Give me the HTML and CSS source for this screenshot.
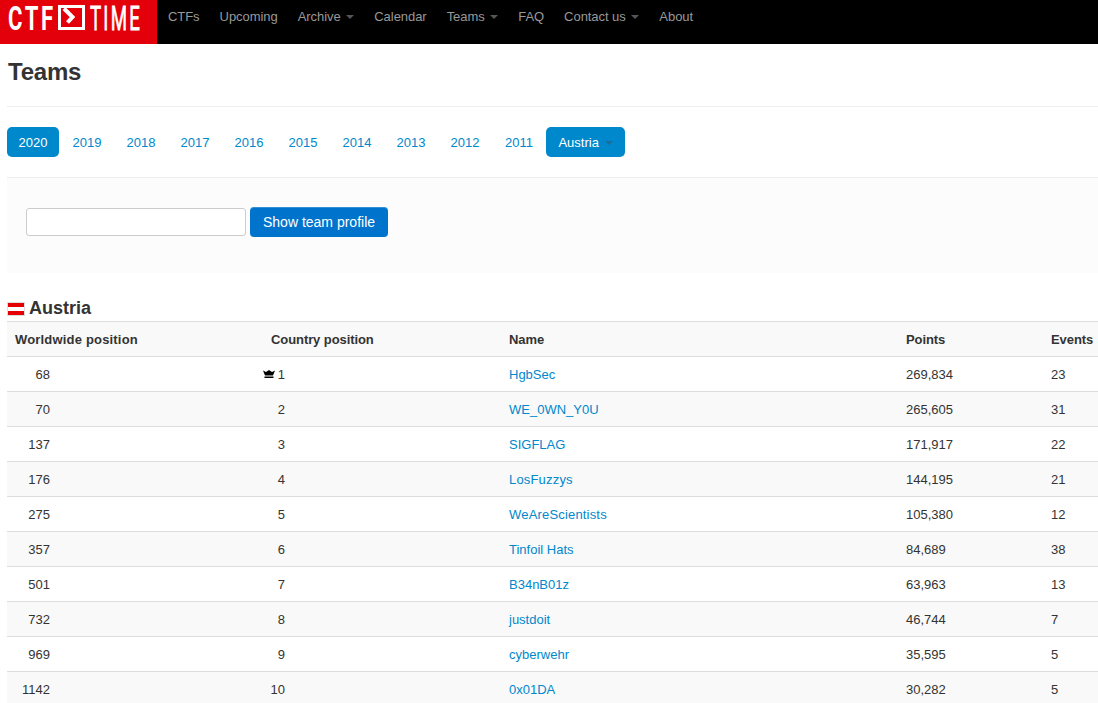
FILE: index.html
```
<!DOCTYPE html>
<html lang="en">
<head>
    <meta charset="UTF-8">
    <title>CTFtime.org / Teams</title>
    <link rel="stylesheet" href="styles.css">
</head>
<body>
<div class="navbar">
    <a class="logo" href="#">
        <svg width="157" height="44" viewBox="0 0 157 44">
            <text class="logo-bold" transform="translate(8 30) scale(.65 1)">CTF</text>
            <path d="M59.500 6.500h24v22h-24z" fill="none" stroke="#fff" stroke-width="3"/>
            <path d="M64 8.500l8.500 8.500-5 5.500" fill="none" stroke="#fff" stroke-width="4"/>
            <text class="logo-thin" transform="translate(90 30) scale(.55 1)">TIME</text>
        </svg>
    </a>
    <ul class="nav">
        <li><a href="#">CTFs</a></li>
        <li><a href="#">Upcoming</a></li>
        <li><a href="#">Archive <b class="caret"></b></a></li>
        <li><a href="#">Calendar</a></li>
        <li><a href="#">Teams <b class="caret"></b></a></li>
        <li><a href="#">FAQ</a></li>
        <li><a href="#">Contact us <b class="caret"></b></a></li>
        <li><a href="#">About</a></li>
    </ul>
</div>
<div class="container">
    <div class="page-header">
        <h2>Teams</h2>
    </div>
    <ul class="pills">
        <li class="active"><a href="#">2020</a></li>
        <li><a href="#">2019</a></li>
        <li><a href="#">2018</a></li>
        <li><a href="#">2017</a></li>
        <li><a href="#">2016</a></li>
        <li><a href="#">2015</a></li>
        <li><a href="#">2014</a></li>
        <li><a href="#">2013</a></li>
        <li><a href="#">2012</a></li>
        <li><a href="#">2011</a></li>
        <li class="active country"><a href="#">Austria <b class="caret"></b></a></li>
    </ul>
    <form class="well">
        <input type="text">
        <button type="button">Show team profile</button>
    </form>
    <h3>
        <svg class="flag" width="18" height="14" viewBox="0 0 18 14">
            <path d="M0 0h18v14H0z" fill="#ddd"/>
            <path d="M1 1h16v12H1z" fill="#e40000"/>
            <path d="M1 5h16v4H1z" fill="#fff"/>
        </svg>
        <span>Austria</span>
    </h3>
    <table>
        <colgroup>
            <col class="col-world">
            <col class="col-country">
            <col class="col-name">
            <col class="col-points">
            <col>
        </colgroup>
        <tr><th class="wide">Worldwide position</th><th>Country position</th><th>Name</th><th>Points</th><th>Events</th></tr>
        <tr>
            <td class="world"><span>68</span></td>
            <td class="place">
                <svg class="crown" width="12" height="10" viewBox="0 0 12 10">
                    <path d="M0 1.500l3 1.500 3-2 3 2 3-1.500-2 5H2zM1.500 7.500h9v1.500h-9z"/>
                </svg>
                <span>1</span>
            </td>
            <td><a href="#">HgbSec</a></td><td>269,834</td><td>23</td>
        </tr>
        <tr><td class="world"><span>70</span></td><td class="place"><span>2</span></td><td><a href="#">WE_0WN_Y0U</a></td><td>265,605</td><td>31</td></tr>
        <tr><td class="world"><span>137</span></td><td class="place"><span>3</span></td><td><a href="#">SIGFLAG</a></td><td>171,917</td><td>22</td></tr>
        <tr><td class="world"><span>176</span></td><td class="place"><span>4</span></td><td><a class="wide" href="#">LosFuzzys</a></td><td>144,195</td><td>21</td></tr>
        <tr><td class="world"><span>275</span></td><td class="place"><span>5</span></td><td><a class="wide" href="#">WeAreScientists</a></td><td>105,380</td><td>12</td></tr>
        <tr><td class="world"><span>357</span></td><td class="place"><span>6</span></td><td><a href="#">Tinfoil Hats</a></td><td>84,689</td><td>38</td></tr>
        <tr><td class="world"><span>501</span></td><td class="place"><span>7</span></td><td><a href="#">B34nB01z</a></td><td>63,963</td><td>13</td></tr>
        <tr><td class="world"><span>732</span></td><td class="place"><span>8</span></td><td><a href="#">justdoit</a></td><td>46,744</td><td>7</td></tr>
        <tr><td class="world"><span>969</span></td><td class="place"><span>9</span></td><td><a href="#">cyberwehr</a></td><td>35,595</td><td>5</td></tr>
        <tr><td class="world"><span>1142</span></td><td class="place"><span>10</span></td><td><a href="#">0x01DA</a></td><td>30,282</td><td>5</td></tr>
    </table>
</div>
</body>
</html>
```
FILE: styles.css
```
*{
    margin: 0;
    padding: 0;
    box-sizing: border-box;
}
html,body{
    height: 703px;
    overflow: hidden;
}
body{
    background: #fff;
    color: #333;
    font: 13px/18px "Liberation Sans", Arial, sans-serif;
}
li{
    list-style: none;
}
a{
    color: #0088cc;
    text-decoration: none;
}
svg{
    display: block;
}
.navbar{
    display: flex;
    height: 44px;
    background: #000;
}
.logo{
    width: 157px;
    margin-right: 1px;
    background: #e3000b;
}
.logo text{
    fill: #fff;
    font-family: Roboto, "Liberation Sans", sans-serif;
    font-size: 34px;
}
.logo-bold{
    font-weight: bold;
    letter-spacing: 4px;
}
.logo-thin{
    letter-spacing: 4px;
    stroke: #fff;
    stroke-width: .8px;
}
.nav,.pills{
    display: flex;
}
.nav a{
    display: block;
    padding: 8px 10px;
    color: #999;
    letter-spacing: -.05px;
}
.caret{
    display: inline-block;
    width: 0;
    border-left: 4px solid transparent;
    border-right: 4px solid transparent;
    border-top: 4px solid #555;
    margin-left: 2px;
    vertical-align: 2px;
}
.container{
    margin-left: 7px;
}
.page-header{
    height: 63px;
    padding: 10px 0 0 1px;
    border-bottom: 1px solid #eee;
}
h2{
    font-size: 24px;
    line-height: 36px;
    letter-spacing: -.2px;
}
.pills{
    margin: 20px 0;
    gap: 2px;
}
.pills a{
    display: block;
    width: 52px;
    padding: 7px 0 5px;
    text-align: center;
    border-radius: 5px;
}
.pills .active a{
    background: #0088cc;
    color: #fff;
}
.pills .country{
    margin-left: -1px;
}
.pills .country a{
    width: 79px;
}
.pills .caret{
    border-top-color: #1c6d99;
}
.well{
    display: flex;
    align-items: flex-start;
    gap: 4px;
    height: 96px;
    padding: 29px 19px;
    background: #fcfcfc;
    border-top: 1px solid #eee;
}
.well input{
    width: 220px;
    height: 28px;
    margin-top: 1px;
    border: 1px solid #ccc;
    border-radius: 3px;
    background: #fff;
}
.well button{
    width: 138px;
    height: 30px;
    border: 0;
    border-radius: 4px;
    background: #0074cc;
    box-shadow: inset 0 1px 0 rgba(255,255,255,.2);
    color: #fff;
    font: 14px/18px "Liberation Sans", Arial, sans-serif;
}
h3{
    display: flex;
    align-items: center;
    gap: 4px;
    margin-top: 22px;
    font-size: 18px;
    line-height: 26px;
}
.flag{
    margin-top: 2px;
}
table{
    width: 1091px;
    table-layout: fixed;
    border-collapse: separate;
    border-spacing: 0;
}
.col-world{
    width: 256px;
}
.col-country{
    width: 238px;
}
.col-name{
    width: 397px;
}
.col-points{
    width: 145px;
}
th,td{
    padding: 9px 0 7px 8px;
    border-top: 1px solid #ddd;
    text-align: left;
    white-space: nowrap;
}
th{
    letter-spacing: -.08px;
}
.wide{
    letter-spacing: .18px;
}
tr:nth-child(odd){
    background: #f9f9f9;
}
.world span{
    display: block;
    width: 35px;
    text-align: right;
}
.place{
    position: relative;
    padding-left: 0;
}
.place span{
    display: block;
    width: 22px;
    text-align: right;
}
.crown{
    position: absolute;
    left: 0;
    top: 12px;
}
```
